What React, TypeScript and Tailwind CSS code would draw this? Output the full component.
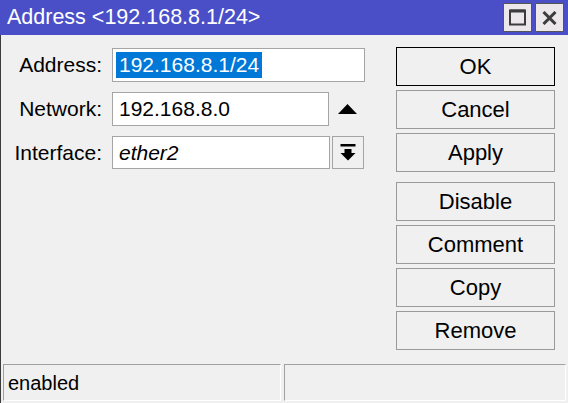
import React from "react";

const font = { fontFamily: '"Liberation Sans", Arial, sans-serif' };

function Btn({ label, primary }: { label: string; primary?: boolean }) {
  return (
    <div
      className={`h-[39px] flex items-center justify-center border bg-[#f0f0f0] text-[22px] text-black ${
        primary ? "border-black" : "border-[#9a9a9a]"
      }`}
    >
      {label}
    </div>
  );
}

export default function App() {
  return (
    <div className="w-[568px] h-[403px] bg-[#f0f0f0] flex flex-col overflow-hidden" style={font}>
      {/* Title bar */}
      <div className="h-[35px] bg-[#4a4fc8] flex items-center pl-[7px] pr-[4px] shrink-0">
        <span className="text-white text-[21.5px] leading-none flex-1 pt-[1px]">Address &lt;192.168.8.1/24&gt;</span>
        <div className="flex gap-[3px]">
          <div className="w-[29px] h-[29px] border border-[#555] bg-[#ebe7eb] flex items-center justify-center">
            <svg width="17" height="17" viewBox="0 0 17 17">
              <rect x="1" y="1.5" width="15" height="14" fill="none" stroke="#3c3c3c" strokeWidth="2" />
              <rect x="1" y="0.5" width="15" height="3" fill="#3c3c3c" />
            </svg>
          </div>
          <div className="w-[29px] h-[29px] border border-[#555] bg-[#ebe7eb] flex items-center justify-center">
            <svg width="15" height="14" viewBox="0 0 15 14">
              <path d="M1.5 1 L13.5 13 M13.5 1 L1.5 13" stroke="#3c3c3c" strokeWidth="3" />
            </svg>
          </div>
        </div>
      </div>

      {/* Body */}
      <div className="flex-1 flex flex-col border-l border-[#3c3c3c]">
        <div className="flex-1 flex pt-[12px]">
          {/* Form */}
          <div className="w-[395px] flex flex-col gap-[10px] pt-[1px] text-[21px] text-black">
            <div className="flex items-center h-[34px]">
              <div className="w-[101px] text-right">Address:</div>
              <div className="ml-[10px] w-[253px] h-[34px] border border-[#a5a5a5] bg-white flex items-center pl-[3px]">
                <span className="bg-[#0078d7] text-white px-[3px] leading-[26px]">192.168.8.1/24</span>
              </div>
            </div>
            <div className="flex items-center h-[34px]">
              <div className="w-[101px] text-right">Network:</div>
              <div className="ml-[10px] w-[217px] h-[34px] border border-[#a5a5a5] bg-white flex items-center pl-[6px]">
                192.168.8.0
              </div>
              <div className="ml-[9px] w-[19px] flex justify-center pb-[1px]">
                <svg width="19" height="10" viewBox="0 0 19 10">
                  <path d="M9.5 0 L19 10 L0 10 Z" fill="#000" />
                </svg>
              </div>
            </div>
            <div className="flex items-center h-[33px]">
              <div className="w-[101px] text-right">Interface:</div>
              <div className="ml-[10px] w-[218px] h-[33px] border border-[#a5a5a5] bg-white flex items-center pl-[6px] italic">
                ether2
              </div>
              <div className="ml-[2px] w-[32px] h-[33px] border border-[#a5a5a5] bg-[#f0f0f0] flex items-center justify-center">
                <svg width="16" height="17" viewBox="0 0 16 17">
                  <rect x="0.5" y="0" width="15" height="2.5" fill="#000" />
                  <path d="M4.5 5 H11.5 V9 H15.5 L8 16.5 L0.5 9 H4.5 Z" fill="#000" />
                </svg>
              </div>
            </div>
          </div>

          {/* Buttons */}
          <div className="w-[159px] flex flex-col">
            <div className="flex flex-col gap-[4px]">
              <Btn label="OK" primary />
              <Btn label="Cancel" />
              <Btn label="Apply" />
            </div>
            <div className="flex flex-col gap-[4px] mt-[10px]">
              <Btn label="Disable" />
              <Btn label="Comment" />
              <Btn label="Copy" />
              <Btn label="Remove" />
            </div>
          </div>
        </div>

        {/* Status bar */}
        <div className="h-[37px] flex gap-[3px] pl-[2px] pr-[2px] mb-[2px] text-[20px] text-black">
          <div className="w-[278px] border-t border-l border-[#a0a0a0] border-r-white border-b-white border-r border-b flex items-center pl-[4px]">
            enabled
          </div>
          <div className="flex-1 border-t border-l border-[#a0a0a0] border-r-white border-b-white border-r border-b" />
        </div>
      </div>
    </div>
  );
}
